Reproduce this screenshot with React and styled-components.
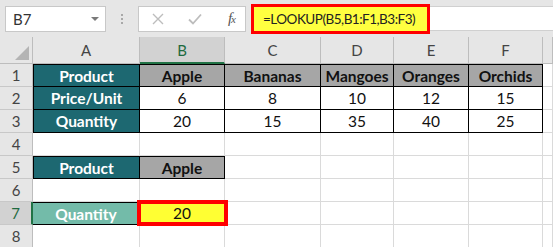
import React from 'react';
import styled, { createGlobalStyle, css } from 'styled-components';

const GlobalStyle = createGlobalStyle`
  html, body {
    margin: 0;
    padding: 0;
    background: #fff;
  }
  body {
    font-family: Lato, "Liberation Sans", Arial, sans-serif;
  }
`;

const Window = styled.div`
  width: 553px;
  height: 247px;
  overflow: hidden;
  background: #fff;
`;

const FormulaBar = styled.div`
  height: 37px;
  box-sizing: border-box;
  background: #e6e6e6;
  display: flex;
  align-items: center;
  padding-left: 5px;
`;

const NameBox = styled.div`
  width: 101px;
  height: 26px;
  box-sizing: border-box;
  background: #fff;
  border: 1px solid #c8c8c8;
  display: flex;
  align-items: center;
  justify-content: space-between;
  padding: 0 6px 0 7px;
  font-size: 15px;
  color: #333;
`;

const Caret = styled.span`
  width: 0;
  height: 0;
  border-left: 4px solid transparent;
  border-right: 4px solid transparent;
  border-top: 4px solid #7a7a7a;
`;

const Dots = styled.div`
  width: 32px;
  display: flex;
  flex-direction: column;
  align-items: center;
  gap: 2px;

  span {
    width: 2px;
    height: 2px;
    background: #a8a8a8;
  }
`;

const FxBox = styled.div`
  width: 108px;
  height: 26px;
  box-sizing: border-box;
  background: #fff;
  border: 1px solid #c8c8c8;
  display: flex;
  align-items: center;
  padding: 0 10px 0 13px;
  gap: 24px;
`;

const Fx = styled.span`
  margin-left: auto;
  font-family: "Liberation Serif", serif;
  font-style: italic;
  font-size: 15px;
  color: #555;
  letter-spacing: -1px;

  small {
    font-size: 11px;
  }
`;

const FormulaHighlight = styled.div`
  margin-left: 5px;
  width: 179px;
  height: 30px;
  box-sizing: border-box;
  border: 3px solid #f00;
  background: #ffff40;
  display: flex;
  align-items: center;
  padding: 0 0 0 9px;
  font-size: 13.5px;
  letter-spacing: -0.5px;
  color: #222;
  white-space: nowrap;
`;

const FormulaRest = styled.div`
  flex: 1;
  height: 25px;
  background: #fff;
  border-top: 1px solid #d0d0d0;
  border-bottom: 1px solid #d0d0d0;
  box-sizing: border-box;
`;

const Sheet = styled.div`
  display: grid;
  grid-template-columns: 33px 107px 85px 96px 73px 75px 74px 10px;
  grid-template-rows: 27px repeat(8, 23px);
`;

const Corner = styled.div`
  background: #e6e6e6;
  border-right: 1px solid #bdbdbd;
  border-bottom: 1px solid #bdbdbd;
  box-sizing: border-box;
  display: flex;
  align-items: flex-end;
  justify-content: flex-end;
  padding: 0 3px 3px 0;

  span {
    width: 0;
    height: 0;
    border-left: 14px solid transparent;
    border-bottom: 14px solid #b4b4b4;
  }
`;

const ColHead = styled.div`
  background: ${p => (p.$active ? '#d2d2d2' : '#e6e6e6')};
  color: ${p => (p.$active ? '#1e6a3f' : '#444')};
  border-right: 1px solid #bdbdbd;
  border-bottom: ${p => (p.$active ? '2px solid #217346' : '1px solid #bdbdbd')};
  box-sizing: border-box;
  display: flex;
  align-items: center;
  justify-content: center;
  font-size: 15px;
`;

const RowHead = styled.div`
  background: ${p => (p.$active ? '#d2d2d2' : '#e6e6e6')};
  color: ${p => (p.$active ? '#1e6a3f' : '#444')};
  border-right: ${p => (p.$active ? '2px solid #217346' : '1px solid #bdbdbd')};
  border-bottom: 1px solid #c8c8c8;
  box-sizing: border-box;
  display: flex;
  align-items: center;
  justify-content: center;
  font-size: 15px;
`;

const tones = {
  plain: css`background: #fff; color: #111;`,
  teal: css`background: #1d6871; color: #fff; font-weight: 700;`,
  gray: css`background: #a6a6a6; color: #111; font-weight: 700;`,
  mint: css`background: #73bba9; color: #fff; font-weight: 700;`,
  yellow: css`background: #ffff33; color: #111;`,
};

const Cell = styled.div`
  position: relative;
  box-sizing: border-box;
  display: flex;
  align-items: center;
  justify-content: center;
  font-size: 15.5px;
  border-right: 1px solid ${p => (p.$ruled ? '#000' : '#dadada')};
  border-bottom: 1px solid ${p => (p.$ruled ? '#000' : '#dadada')};
  border-top: ${p => (p.$top ? '1px solid #000' : 'none')};
  border-left: ${p => (p.$left ? '1px solid #000' : 'none')};
  ${p => tones[p.$tone || 'plain']}

  ${p => p.$marked && css`
    z-index: 1;
    &::after {
      content: '';
      position: absolute;
      inset: -2px -4px -2px -3px;
      border: 4px solid #f00;
    }
  `}
`;

const columns = ['A', 'B', 'C', 'D', 'E', 'F', ''];

const table = [
  ['Product', 'Apple', 'Bananas', 'Mangoes', 'Oranges', 'Orchids'],
  ['Price/Unit', 6, 8, 10, 12, 15],
  ['Quantity', 20, 15, 35, 40, 25],
];

const cellFor = (r, c) => {
  if (r <= 3 && c < 6) {
    const tone = c === 0 ? 'teal' : r === 1 ? 'gray' : 'plain';
    return { text: table[r - 1][c], tone, ruled: true, top: r === 1, left: c === 0 };
  }
  if (r === 5 && c < 2) {
    return { text: c === 0 ? 'Product' : 'Apple', tone: c === 0 ? 'teal' : 'gray', ruled: true, top: true, left: c === 0 };
  }
  if (r === 7 && c === 0) return { text: 'Quantity', tone: 'mint', ruled: true, top: true };
  if (r === 7 && c === 1) return { text: 20, tone: 'yellow', marked: true };
  return { text: '', tone: 'plain' };
};

const App = () => {
  const rows = [1, 2, 3, 4, 5, 6, 7, 8];
  return (
    <Window>
      <GlobalStyle />
      <FormulaBar>
        <NameBox>B7<Caret /></NameBox>
        <Dots><span /><span /><span /></Dots>
        <FxBox>
          <svg width="12" height="12" viewBox="0 0 12 12">
            <path d="M1 1 L11 11 M11 1 L1 11" stroke="#bdbdbd" strokeWidth="1.4" fill="none" />
          </svg>
          <svg width="14" height="12" viewBox="0 0 14 12">
            <path d="M1 6.5 L5 10.5 L13 1.5" stroke="#bdbdbd" strokeWidth="1.8" fill="none" />
          </svg>
          <Fx>f<small>x</small></Fx>
        </FxBox>
        <FormulaHighlight>=LOOKUP(B5,B1:F1,B3:F3)</FormulaHighlight>
        <FormulaRest />
      </FormulaBar>
      <Sheet>
        <Corner><span /></Corner>
        {columns.map((col, i) => (
          <ColHead key={'h' + i} $active={col === 'B'}>{col}</ColHead>
        ))}
        {rows.map(r => (
          <React.Fragment key={r}>
            <RowHead $active={r === 7}>{r}</RowHead>
            {columns.map((_, c) => {
              const cell = cellFor(r, c);
              return (
                <Cell
                  key={c}
                  $tone={cell.tone}
                  $ruled={cell.ruled}
                  $top={cell.top}
                  $left={cell.left}
                  $marked={cell.marked}
                >
                  {cell.text}
                </Cell>
              );
            })}
          </React.Fragment>
        ))}
      </Sheet>
    </Window>
  );
};

export default App;
